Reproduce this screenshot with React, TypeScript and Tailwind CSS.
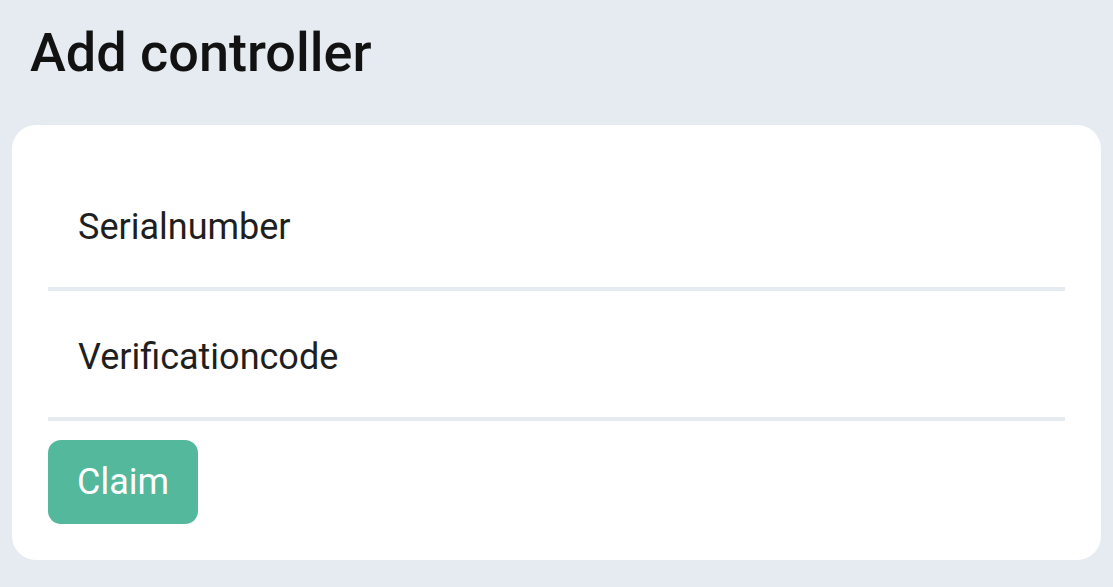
import React from 'react'

const font = { fontFamily: 'Roboto, "Noto Sans", Arial, sans-serif' }

function FieldRow({ label }: { label: string }) {
  return (
    <div className="flex h-[130px] items-center border-b-4 border-[#e6ebf2] pl-[30px] pt-[6px]">
      <span className="text-[36px] text-[#1f1f1f]">{label}</span>
    </div>
  )
}

export default function App() {
  return (
    <div className="min-h-[587px] bg-[#e6ebf2] px-3 pb-[27px] pt-[20px]" style={font}>
      <h1 className="mb-[39px] pl-[18px] text-[54px] font-medium leading-[66px] text-[#121212]">
        Add controller
      </h1>

      <div className="rounded-3xl bg-white p-9">
        <FieldRow label="Serialnumber" />
        <FieldRow label="Verificationcode" />
        <button className="mt-[19px] h-[84px] w-[150px] rounded-[13px] bg-[#54b89d] text-[36px] text-white">
          Claim
        </button>
      </div>
    </div>
  )
}
